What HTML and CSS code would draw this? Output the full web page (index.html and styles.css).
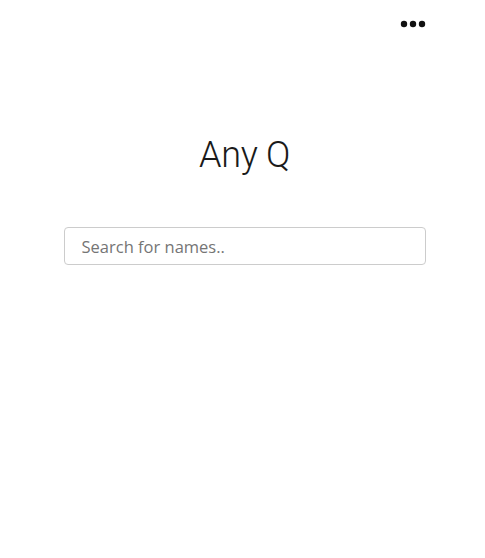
FILE: index.html
```html
<!DOCTYPE html>
<html>
<head>
<meta charset="utf-8">
<link rel="stylesheet" href="styles.css">
</head>
<body>
<div class="page">
  <header class="topbar">
    <button class="menu" aria-label="More">
      <svg width="26" height="8" viewBox="0 0 26 8"><circle cx="4" cy="4" r="3.2"/><circle cx="13" cy="4" r="3.2"/><circle cx="22" cy="4" r="3.2"/></svg>
    </button>
  </header>
  <main class="main">
    <h1 class="title">Any Q</h1>
    <input class="search" type="text" placeholder="Search for names..">
  </main>
</div>
</body>
</html>
```
FILE: styles.css
```css
html, body { margin: 0; padding: 0; background: #fff; }
body { font-family: "Lato", sans-serif; }
.page { width: 485px; height: 558px; display: flex; flex-direction: column; }
.topbar { display: flex; justify-content: flex-end; padding: 20px 59px 0 0; height: 8px; }
.menu { border: 0; background: none; padding: 0; margin: 0; width: 26px; height: 8px; display: block; }
.menu svg { display: block; fill: #111; }
.main { display: flex; flex-direction: column; align-items: center; padding: 105px 0 0 4px; }
.title { margin: 0; font-family: "Roboto", sans-serif; font-weight: 300; font-size: 36px; color: #1a1a1a; line-height: 44px; letter-spacing: -0.3px; }
.search { margin-top: 50px; width: 362px; height: 38px; box-sizing: border-box; border: 1px solid #ccc; border-radius: 4px; padding: 0 17px; font-family: "Open Sans", sans-serif; font-size: 16.5px; color: #333; outline: none; }
.search::placeholder { color: #757575; }
```
